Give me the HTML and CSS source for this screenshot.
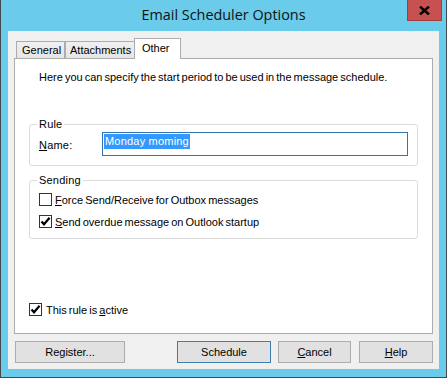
FILE: index.html
```html
<!DOCTYPE html>
<html lang="en">
<head>
    <meta charset="UTF-8">
    <title>Email Scheduler Options</title>
    <link rel="stylesheet" href="styles.css">
</head>
<body>

    <div class="window">
        <div class="titlebar">
            <span></span>
            <span class="title">Email Scheduler Options</span>
            <div class="close">
                <svg width="11" height="9" viewBox="0 0 11 9">
                    <path d="M1 0.5 L10 8.5 M10 0.5 L1 8.5" stroke="#000" stroke-width="2.4" fill="none"/>
                </svg>
            </div>
        </div>

        <div class="client">
            <div class="tabs">
                <div class="tab tab-general">General</div>
                <div class="tab tab-attach">Attachments</div>
                <div class="tab tab-active">Other</div>
            </div>

            <div class="panel">
                <div class="intro">Here you can specify the start period to be used in the message schedule.</div>

                <fieldset class="group group-rule">
                    <legend>Rule</legend>
                    <div class="name-row">
                        <span class="name-label"><u>N</u>ame:</span>
                        <div class="textbox"><span class="selected">Monday moming</span></div>
                    </div>
                </fieldset>

                <fieldset class="group group-sending">
                    <legend>Sending</legend>
                    <div class="check-row">
                        <span class="box"></span>
                        <span><u>F</u>orce Send/Receive for Outbox messages</span>
                    </div>
                    <div class="check-row">
                        <span class="box">
                            <svg width="11" height="11" viewBox="0 0 11 11"><path d="M1.5 5.5 L4 8.3 L9.6 1.8" stroke="#000" stroke-width="2.2" fill="none"/></svg>
                        </span>
                        <span><u>S</u>end overdue message on Outlook startup</span>
                    </div>
                </fieldset>

                <div class="check-row active-row">
                    <span class="box">
                        <svg width="11" height="11" viewBox="0 0 11 11"><path d="M1.5 5.5 L4 8.3 L9.6 1.8" stroke="#000" stroke-width="2.2" fill="none"/></svg>
                    </span>
                    <span>This rule is <u>a</u>ctive</span>
                </div>
            </div>

            <div class="buttons">
                <button class="btn btn-register">Register...</button>
                <span class="spacer"></span>
                <button class="btn btn-default btn-schedule">Schedule</button>
                <button class="btn btn-cancel"><u>C</u>ancel</button>
                <button class="btn btn-help"><u>H</u>elp</button>
            </div>
        </div>
    </div>

</body>
</html>
```

FILE: styles.css
```css
body {
    margin: 0;
    padding: 0;
    font-family: "Liberation Sans", Arial, sans-serif;
    font-size: 11px;
    word-spacing: -1px;
    color: #000;
}

/* Window frame */
.window {
    width: 447px;
    height: 378px;
    box-sizing: border-box;
    background-color: #6acbeb;
    border: 1px solid #3f4a50;
    border-top: none;
    display: flex;
    flex-direction: column;
}

.titlebar {
    height: 31px;
    display: grid;
    grid-template-columns: 1fr auto 1fr;
    align-items: start;
}

.title {
    font-family: "Open Sans", "Noto Sans", sans-serif;
    font-size: 14.4px;
    word-spacing: 0;
    line-height: 30px;
    color: #111;
}

.close {
    justify-self: end;
    width: 35px;
    height: 21px;
    box-sizing: border-box;
    margin-right: 4px;
    background-color: #c75050;
    border: 1px solid #a13f3f;
    border-top: none;
    display: flex;
    align-items: center;
    justify-content: center;
}

/* Client area */
.client {
    flex: 1;
    margin: 0 7px 8px 7px;
    padding: 7px 6px 6px 6px;
    background-color: #f0f0f0;
    display: flex;
    flex-direction: column;
}

/* Tabs */
.tabs {
    height: 20px;
    display: flex;
    align-items: flex-end;
    padding-left: 2px;
}

.tab {
    height: 17px;
    box-sizing: border-box;
    border: 1px solid #acacac;
    border-bottom: none;
    background: linear-gradient(#f0f0f0, #e5e5e5);
    padding: 2px 0 0 5px;
    line-height: 13px;
}

.tab-general {
    width: 49px;
}

.tab-attach {
    width: 70px;
    padding-left: 4px;
}

.tab-active {
    position: relative;
    z-index: 1;
    width: 47px;
    height: 21px;
    margin-left: -1px;
    margin-bottom: -1px;
    background: #fff;
    padding: 3px 0 0 7px;
}

.panel {
    height: 276px;
    box-sizing: border-box;
    border: 1px solid #acacac;
    background-color: #fff;
    padding: 12px 14px 0 14px;
}

.intro {
    line-height: 13px;
    margin-left: 10px;
}

/* Group boxes */
.group {
    margin: 0;
    border: 1px solid #dcdcdc;
    border-radius: 3px;
    padding: 1px 9px 9px 9px;
}

.group legend {
    padding: 0 2px;
    margin-left: -2px;
    line-height: 13px;
    letter-spacing: 0.2px;
}

.group-rule {
    margin-top: 34px;
}

.group-sending {
    margin-top: 8px;
    padding-top: 4px;
    padding-bottom: 8px;
}

.name-row {
    display: flex;
    align-items: center;
}

.name-label {
    width: 63px;
    padding-top: 1px;
    letter-spacing: 0.2px;
}

.textbox {
    flex: 1;
    height: 24px;
    box-sizing: border-box;
    border: 1px solid #3574b0;
    padding: 1px 0 0 1px;
    display: flex;
    align-items: flex-start;
}

.selected {
    background-color: #3399ff;
    color: #fff;
    line-height: 15px;
    padding: 0 1px;
    letter-spacing: 0.2px;
    word-spacing: 0;
}

/* Checkboxes */
.check-row {
    height: 17px;
    display: flex;
    align-items: center;
    gap: 3px;
}

.check-row + .check-row {
    margin-top: 5px;
}

.box {
    width: 13px;
    height: 13px;
    box-sizing: border-box;
    border: 1px solid #333;
    background-color: #fff;
    display: flex;
    align-items: center;
    justify-content: center;
}

.active-row {
    margin-top: 62px;
    gap: 4px;
}

/* Buttons */
.buttons {
    margin-top: 7px;
    display: flex;
}

.btn {
    height: 22px;
    box-sizing: border-box;
    border: 1px solid #adadad;
    background-color: #e1e1e1;
    font-family: "Liberation Sans", Arial, sans-serif;
    font-size: 11px;
    color: #000;
    padding: 0;
    margin: 0;
}

.btn-register {
    width: 110px;
    margin-left: 1px;
}

.spacer {
    flex: 1;
}

.btn-default {
    border-color: #3c7fb1;
}

.btn-schedule {
    width: 94px;
}

.btn-cancel {
    width: 73px;
    margin-left: 7px;
}

.btn-help {
    width: 74px;
    margin-left: 8px;
}
```
